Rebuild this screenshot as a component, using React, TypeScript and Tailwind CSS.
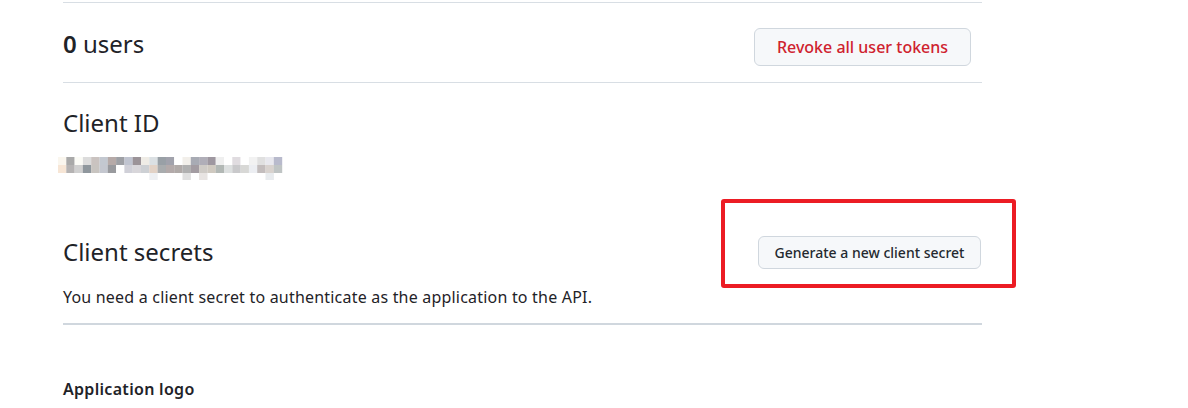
const row1 = [
  '#faf6ee', '#a9a9a9', '#fbfbf6', '#dcdcdc', '#cac3c0', '#c3c8d0', '#b6aaa8', '#9ea0a5', '#c0c4d0', '#9b9398',
  '#efece6', '#dbe0e3', '#99a0a6', '#a1a2ac', '#ffffff', '#f2efea', '#a8abb4', '#b0aeb8', '#9e97a0', '#efefef',
  '#ffffff', '#e0dce0', '#ffffff', '#f2f2f2', '#e0e0e0', '#e8e8ee', '#b8bacc',
];
const row2 = [
  '#f7e6d6', '#b5b3b3', '#d0d0d0', '#8f979d', '#c8c4c0', '#c4c7cf', '#999a9e', '#ffffff', '#d0d0d8', '#d8d6da',
  '#cdd0d4', '#e2d2c6', '#a9acae', '#b3aaaa', '#b0aaa8', '#b0b0b0', '#a39ca2', '#cfcbc6', '#cfc9c0', '#b2b8b5',
  '#dde0e0', '#c9c9cb', '#d8d8d6', '#eceef2', '#c3bdbd', '#d8d2ce', '#bfc4c4',
];
const row3: Record<number, string> = { 11: '#eef0f3', 15: '#e0e0e0', 17: '#e8e4e2', 25: '#e8ebee' };

// pixelated (blurred out) client id
const BlurredId = () => (
  <svg width="225" height="23" viewBox="0 0 225 23" className="block">
    {row1.map((c, i) => (
      <rect key={'a' + i} x={i * 8.3} y={0} width={8.4} height={8} fill={c} />
    ))}
    {row2.map((c, i) => (
      <rect key={'b' + i} x={i * 8.3} y={8} width={8.4} height={8} fill={c} />
    ))}
    {Object.entries(row3).map(([i, c]) => (
      <rect key={'c' + i} x={Number(i) * 8.3} y={16} width={8.4} height={7} fill={c} />
    ))}
  </svg>
);

export default function App() {
  return (
    <div className="min-h-[408px] bg-white font-['Noto_Sans',sans-serif] text-[#1f2328]">
      <div className="ml-[63px] w-[919px] pt-[2px]">
        {/* users */}
        <div className="flex items-start justify-between border-t border-[#d8dee4] pt-[23px] pb-[16px]">
          <h3 className="text-[24px] leading-9">
            <span className="font-semibold">0</span> users
          </h3>
          <button className="mr-[11px] mt-[2px] h-[38px] w-[217px] rounded-md border border-[#d0d7de] bg-[#f6f8fa] text-[16px] font-medium text-[#cf222e]">
            Revoke all user tokens
          </button>
        </div>

        {/* client id */}
        <div className="border-t border-[#d8dee4] pt-[22px]">
          <h3 className="text-[24px] leading-9">Client ID</h3>
          <div className="-ml-[5px] mt-[16px]">
            <BlurredId />
          </div>
        </div>

        {/* client secrets */}
        <div className="relative mt-[54px] border-b-2 border-[#d0d7de] pb-[14px]">
          <div className="flex items-center justify-between">
            <h3 className="text-[24px] leading-9">Client secrets</h3>
            <button className="mr-px h-[33px] w-[223px] rounded-md border border-[#d0d7de] bg-[#f6f8fa] text-[14px] font-medium text-[#24292f]">
              Generate a new client secret
            </button>
          </div>
          <p className="mt-[15px] text-[16px] leading-6 tracking-[0.2px]">
            You need a client secret to authenticate as the application to the API.
          </p>
          <div className="pointer-events-none absolute left-[658px] top-[-35px] h-[89px] w-[295px] rounded-[3px] border-[4px] border-[#ec1c24]" />
        </div>

        <h4 className="mt-[52px] text-[16px] font-semibold leading-6 tracking-[0.3px]">Application logo</h4>
      </div>
    </div>
  );
}
